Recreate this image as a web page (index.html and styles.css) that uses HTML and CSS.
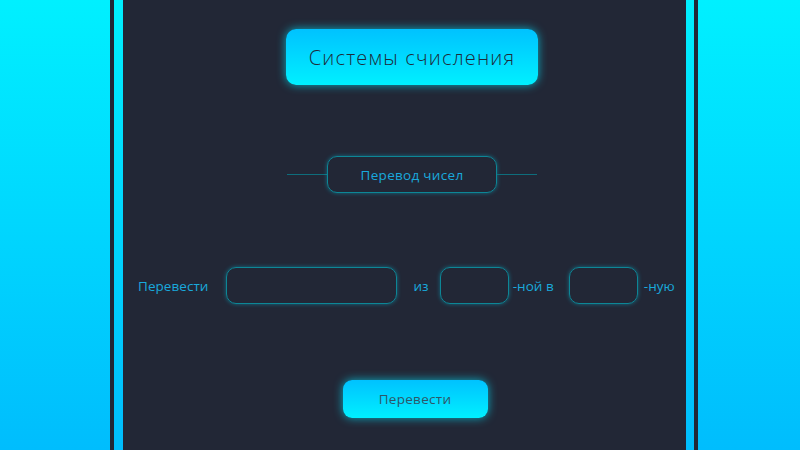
FILE: index.html
```html
<!DOCTYPE html>
<html lang="ru">
<head>
    <meta charset="UTF-8">
    <meta name="viewport" content="width=device-width, initial-scale=1.0">
    <title>Системы счисления</title>
    <link rel="stylesheet" href="styles.css">
</head>
<body>
    <div class="frame">
        <div class="panel">
            <div class="title">Системы счисления</div>

            <div class="section">
                <span class="line"></span>
                <div class="section-name">Перевод чисел</div>
                <span class="line"></span>
            </div>

            <form class="row">
                <label class="lbl lbl-first" for="num">Перевести</label>
                <input class="field field-num" type="text" id="num">
                <span class="lbl lbl-iz">из</span>
                <input class="field field-base" type="text" id="from">
                <span class="lbl lbl-noi">-ной в</span>
                <input class="field field-base" type="text" id="to">
                <span class="lbl lbl-last">-ную</span>
            </form>

            <button type="button" class="btn">Перевести</button>
        </div>
    </div>
</body>
</html>
```

FILE: styles.css
```css
html, body {
    margin: 0;
    height: 450px;
    overflow: hidden;
}
body {
    background: linear-gradient(#00f0ff, #00bdfd);
    font-family: "Open Sans", sans-serif;
}
.frame {
    margin-left: 110px;
    width: 563px;
    height: 450px;
    border-left: 4px solid #222736;
    border-right: 4px solid #222736;
    padding: 0 8px 0 9px;
}
.panel {
    height: 100%;
    background: #222736;
    padding-left: 15px;
    display: flex;
    flex-direction: column;
    align-items: center;
}
.title {
    margin-top: 29px;
    width: 252px;
    height: 56px;
    border-radius: 10px;
    background: linear-gradient(#00c2ff, #00f0ff);
    box-shadow: 0 0 10px rgba(0, 229, 255, 0.7);
    color: #1e2b3a;
    font-size: 20px;
    font-weight: 300;
    letter-spacing: 1.2px;
    display: flex;
    align-items: center;
    justify-content: center;
}
.section {
    margin-top: 71px;
    width: 250px;
    display: flex;
    align-items: center;
}
.line {
    flex: 1;
    height: 1px;
    background: #0e6d7c;
}
.section-name {
    width: 168px;
    height: 35px;
    border: 1px solid #0d8696;
    border-radius: 10px;
    box-shadow: 0 0 4px rgba(0, 200, 230, 0.45);
    color: #19a9dc;
    font-size: 13.5px;
    letter-spacing: 0.3px;
    display: flex;
    align-items: center;
    justify-content: center;
}
.row {
    margin: 74px 0 0;
    align-self: stretch;
    display: flex;
    align-items: center;
}
.lbl {
    color: #19a9dc;
    font-size: 13.5px;
    letter-spacing: 0.05px;
}
.field {
    box-sizing: border-box;
    border: 1px solid #0d8696;
    border-radius: 10px;
    background: transparent;
    box-shadow: 0 0 4px rgba(0, 200, 230, 0.45);
    outline: none;
    margin: 0;
    padding: 0 8px;
}
.field-num {
    width: 171px;
    height: 37px;
    margin-left: 18px;
    margin-right: 16px;
}
.field-base {
    width: 69px;
    height: 37px;
    margin-top: -1px;
}
.lbl-iz {
    margin-right: 11px;
}
.lbl-noi {
    margin-left: 4px;
    margin-right: 15px;
}
.lbl-last {
    margin-left: 6px;
}
.btn {
    margin-top: 76px;
    margin-left: 6px;
    width: 145px;
    height: 38px;
    border: none;
    border-radius: 9px;
    background: linear-gradient(#00c2ff, #00f0ff);
    box-shadow: 0 0 10px rgba(0, 229, 255, 0.7);
    color: #2e5668;
    font-family: "Open Sans", sans-serif;
    font-size: 13.5px;
    letter-spacing: 0.3px;
    cursor: pointer;
}
```
